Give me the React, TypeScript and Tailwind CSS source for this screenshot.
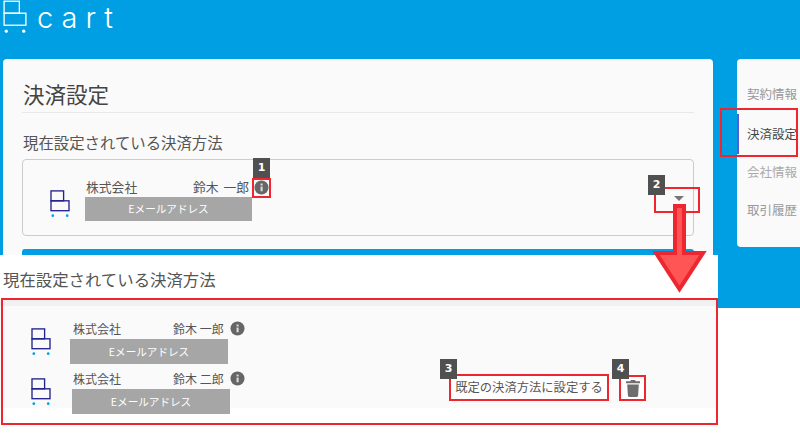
const jp = { fontFamily: '"Noto Sans CJK JP", "Noto Sans", sans-serif' };

function Logo({ className, stroke, dot, sw }: { className: string; stroke: string; dot: string; sw: number }) {
  return (
    <svg viewBox="0 0 22 30" className={className} fill="none">
      <rect x="1" y="1" width="14" height="11" stroke={stroke} strokeWidth={sw} />
      <rect x="1" y="12" width="20" height="11" stroke={stroke} strokeWidth={sw} />
      <circle cx="3" cy="28.500" r="1.500" fill={dot} />
      <circle cx="19" cy="28.500" r="1.500" fill={dot} />
    </svg>
  );
}

function Info({ className = "" }: { className?: string }) {
  return (
    <svg viewBox="0 0 16 16" className={className}>
      <circle cx="8" cy="8" r="7.500" fill="#666" />
      <rect x="7" y="7" width="2.200" height="5" fill="#ddd" />
      <rect x="7" y="3.800" width="2.200" height="2" fill="#ddd" />
    </svg>
  );
}

function Badge({ n, className }: { n: number; className: string }) {
  return (
    <div
      className={`absolute w-[17px] h-[20px] bg-[#505050] text-white text-[11px] font-bold flex items-center justify-center ${className}`}
      style={{ fontFamily: '"DejaVu Sans", sans-serif' }}
    >
      {n}
    </div>
  );
}

function Method({ second, name, className }: { second?: boolean; name: string; className: string }) {
  return (
    <div className={`flex items-start ${className}`}>
      <Logo className="w-[20px] h-[27px] ml-[31px] mt-[9px]" stroke="#23238e" dot="#00a0e9" sw={1.500} />
      <div className={second ? "ml-[21px] w-[158px]" : "ml-[19px] w-[158px]"}>
        <div className="flex justify-between items-center h-[20px] text-[12px] text-[#555] leading-none">
          <span className={second ? "ml-[1px]" : "ml-[3px]"}>株式会社</span>
          <span className={second ? "mr-[2px] w-[55px] shrink-0 whitespace-nowrap" : "w-[55px] shrink-0 whitespace-nowrap"}>{name}</span>
        </div>
        <div className="h-[25px] bg-[#a6a6a6] text-white text-[10.600px] flex items-center justify-center">Eメールアドレス</div>
      </div>
      <Info className={second ? "w-[15px] h-[15px] mt-[2px]" : "w-[15px] h-[15px] ml-[2px] mt-[2px]"} />
    </div>
  );
}

export default function App() {
  return (
    <div className="relative w-[800px] h-[433px] overflow-hidden bg-white" style={jp}>
      <div className="h-[308px] bg-[#009fe3]">
        <header className="h-[59px] flex items-start pl-[3px]">
          <Logo className="w-[24px] h-[33px]" stroke="#fff" dot="#fff" sw={1.200} />
          <span
            className="ml-[10px] mt-[1px] text-white text-[29px] leading-[34px] font-light tracking-[8px]"
            style={{ fontFamily: 'Inter, sans-serif' }}
          >
            cart
          </span>
        </header>
        <div className="flex items-start pl-[3px] gap-[24px]">
          <main className="w-[710px] h-[249px] bg-[#fafafa] rounded-t-[4px] pl-[19px] pr-[19px] pt-[20px]">
            <h1 className="text-[21.500px] leading-[30px] text-[#444] h-[34px] pl-[1px] border-b border-[#e8e8e8]">決済設定</h1>
            <h2 className="text-[15.400px] leading-[22px] text-[#555] mt-[18px] pl-[1px]">現在設定されている決済方法</h2>
            <div className="mt-[6px] h-[77px] border border-[#ccc] rounded-[4px] flex">
              <Logo className="w-[20px] h-[27px] ml-[27px] mt-[30px]" stroke="#23238e" dot="#00a0e9" sw={1.500} />
              <div className="ml-[15px] mt-[17px] w-[167px]">
                <div className="flex justify-between h-[20px] items-center text-[12.800px] text-[#555] leading-none">
                  <span className="ml-[1px]">株式会社</span>
                  <span className="w-[59px] whitespace-nowrap [word-spacing:2px]">鈴木 一郎</span>
                </div>
                <div className="h-[24px] bg-[#a6a6a6] text-white text-[10.600px] flex items-center justify-center">Eメールアドレス</div>
              </div>
              <Info className="w-[15px] h-[15px] ml-[2px] mt-[20px]" />
              <div className="ml-auto mr-[9px] mt-[36px] w-0 h-0 border-l-[5px] border-r-[5px] border-t-[5px] border-l-transparent border-r-transparent border-t-[#777]" />
            </div>
            <div className="mt-[13px] h-[6px] bg-[#009fe3] rounded-t-[3px]" />
          </main>
          <nav className="w-[63px] h-[188px] bg-[#fafafa] rounded-l-[4px] pt-[25px] text-[12.500px] leading-[20px] overflow-hidden">
            <div className="pl-[10px] h-[20px] text-[#999] whitespace-nowrap">契約情報</div>
            <div className="mt-[10px] h-[40px] pl-[10px] border-l-2 border-[#5b5bd6] text-[#444] flex items-center whitespace-nowrap">
              <span className="-ml-[2px]">決済設定</span>
            </div>
            <div className="mt-[8px] pl-[10px] h-[20px] text-[#aaa] whitespace-nowrap">会社情報</div>
            <div className="mt-[18px] pl-[10px] h-[20px] text-[#999] whitespace-nowrap">取引履歴</div>
          </nav>
        </div>
      </div>

      {/* pasted enlargement */}
      <section className="absolute left-0 top-[255px] w-[718px] h-[178px] bg-white">
        <h2 className="text-[16.400px] leading-[24px] text-[#555] pl-[3px] pt-[12px] h-[45px]">現在設定されている決済方法</h2>
        <div className="h-[108px] bg-[#fafafa] border-t-[6px] border-[#f1f1f1]">
          <Method name="鈴木 一郎" className="mt-[13px]" />
          <Method second name="鈴木 二郎" className="mt-[5px]" />
        </div>
      </section>

      {/* callouts */}
      <div className="absolute left-[1px] top-[298px] w-[717px] h-[127px] border-2 border-[#ee2630]" />
      <div className="absolute left-[252px] top-[178px] w-[19px] h-[20px] border-2 border-[#ee2630]" />
      <div className="absolute left-[654px] top-[187px] w-[46px] h-[26px] border-2 border-[#ee2630]" />
      <div className="absolute left-[720px] top-[108px] w-[78px] h-[49px] border-2 border-[#ee2630]" />
      <div className="absolute left-[449px] top-[374px] w-[160px] h-[27px] border-2 border-[#ee2630] bg-white flex items-center justify-center text-[12.300px] text-[#555] whitespace-nowrap">
        既定の決済方法に設定する
      </div>
      <div className="absolute left-[619px] top-[375px] w-[27px] h-[26px] border-2 border-[#ee2630] bg-white flex items-center justify-center">
        <svg viewBox="0 0 14 17" className="w-[14px] h-[17px]" fill="#6e6e6e">
          <path d="M5 0h4l.6 1.200H14v2H0v-2h4.400z" />
          <path d="M1.200 4.400h11.600l-.7 11.200c-.05.8-.6 1.400-1.400 1.400H3.300c-.8 0-1.350-.6-1.400-1.400z" />
        </svg>
      </div>
      <Badge n={1} className="left-[253px] top-[158px]" />
      <Badge n={2} className="left-[648px] top-[175px]" />
      <Badge n={3} className="left-[440px] top-[359px]" />
      <Badge n={4} className="left-[612px] top-[359px]" />
      <svg className="absolute left-[648px] top-[202px] w-[64px] h-[96px]" viewBox="0 0 64 96">
        <path d="M27 4H36V51H55L31.500 87L8 51H27Z" fill="#ff5555" stroke="#ee2630" strokeWidth="4" />
      </svg>
    </div>
  );
}
